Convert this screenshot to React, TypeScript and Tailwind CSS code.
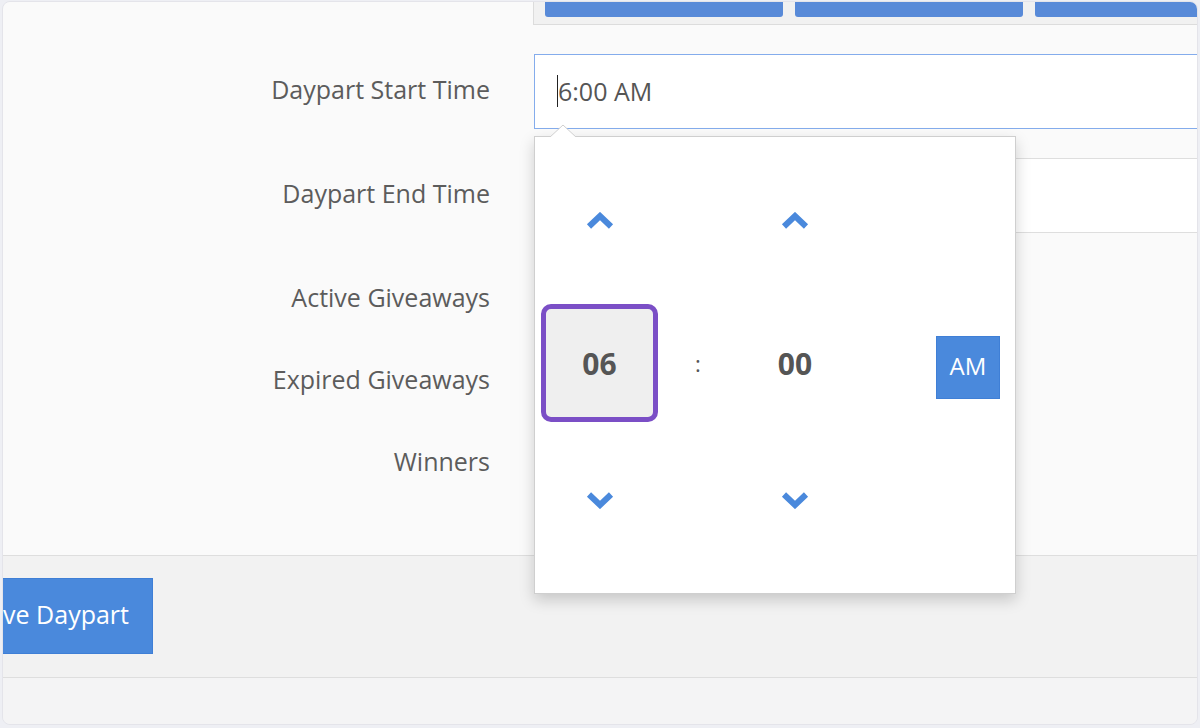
import React from "react";

const labelCls = "w-[530px] shrink-0 text-right pr-[43px] text-[25px] text-[#5c5c5c]";

function Chevron({ down }: { down?: boolean }) {
  return (
    <svg width="30" height="18" viewBox="0 0 30 18" className={down ? "rotate-180" : ""}>
      <polyline
        points="4,14.5 15,4 26,14.5"
        fill="none"
        stroke="#4a89dc"
        strokeWidth="6"
        strokeLinejoin="miter"
      />
    </svg>
  );
}

function TimePicker() {
  return (
    <div className="absolute left-[534px] top-[136px] w-[482px] h-[458px] bg-white border border-[#cfcfcf] shadow-[0_6px_14px_rgba(0,0,0,0.18)]">
      {/* arrow */}
      <svg className="absolute left-[13px] top-[-13px]" width="30" height="14" viewBox="0 0 30 14">
        <polygon points="1,14 15,1 29,14" fill="white" stroke="#cfcfcf" strokeWidth="1" />
        <rect x="0" y="13" width="30" height="2" fill="white" />
      </svg>
      <div className="flex pl-[6px] pt-[49px]">
        {/* hours */}
        <div className="w-[117px] flex flex-col items-center">
          <div className="h-[70px] flex items-center justify-center">
            <Chevron />
          </div>
          <div className="mt-[48px] w-[117px] h-[118px] border-[5px] border-[#7b4fc6] rounded-[10px] bg-[#efefef] flex items-center justify-center text-[30px] font-bold text-[#555]">
            06
          </div>
          <div className="mt-[43px] h-[70px] flex items-center justify-center">
            <Chevron down />
          </div>
        </div>
        {/* separator */}
        <div className="w-[80px] flex flex-col items-center">
          <div className="mt-[118px] h-[118px] flex items-center justify-center text-[22px] text-[#555]">
            :
          </div>
        </div>
        {/* minutes */}
        <div className="w-[114px] flex flex-col items-center">
          <div className="h-[70px] flex items-center justify-center">
            <Chevron />
          </div>
          <div className="mt-[48px] h-[118px] flex items-center justify-center text-[30px] font-bold text-[#555]">
            00
          </div>
          <div className="mt-[43px] h-[70px] flex items-center justify-center">
            <Chevron down />
          </div>
        </div>
        <div className="w-[84px]" />
        {/* period */}
        <div className="w-[64px] flex flex-col">
          <button className="mt-[150px] w-[64px] h-[63px] bg-[#4a89dc] border border-[#3f7fd6] text-white text-[24px] flex items-center justify-center pb-[3px]">
            AM
          </button>
        </div>
      </div>
    </div>
  );
}

export default function App() {
  return (
    <div className="relative w-[1200px] h-[728px] overflow-hidden bg-[#eeeff4] font-['Open_Sans',sans-serif]">
      <div className="mt-[1px] mx-[2px] h-[724px] rounded-lg border border-[#e4e4ea] overflow-hidden flex flex-col">
        {/* form */}
        <div className="h-[554px] shrink-0 bg-[#fafafa] border-b border-[#dedede]">
          <div className="flex">
            <div className="w-[530px] shrink-0" />
            <div className="w-[700px] shrink-0 h-[23px] bg-[#f1f1f1] border-l border-b border-[#dcdcdc] flex gap-[12px] pl-[11px]">
              <div className="w-[240px] h-[15px] bg-[#588ad8] rounded-b-[3px]" />
              <div className="w-[230px] h-[15px] bg-[#588ad8] rounded-b-[3px]" />
              <div className="w-[200px] h-[15px] bg-[#588ad8] rounded-b-[3px]" />
            </div>
          </div>

          <div className="flex items-center mt-[29px]">
            <div className={`${labelCls} mb-[4px]`}>Daypart Start Time</div>
            <div className="ml-[1px] w-[700px] shrink-0 h-[75px] bg-white border border-[#84acec] flex items-center pl-[22px] text-[25px] text-[#555] pb-[2px]">
              <span className="border-l border-[#222] leading-[32px]">6:00 AM</span>
            </div>
          </div>

          <div className="flex items-center mt-[29px]">
            <div className={`${labelCls} mb-[4px]`}>Daypart End Time</div>
            <div className="ml-[1px] w-[700px] shrink-0 h-[75px] bg-white border border-[#dedede]" />
          </div>

          <div className="mt-[24px]">
            {["Active Giveaways", "Expired Giveaways", "Winners"].map((label) => (
              <div key={label} className="h-[82px] flex items-center">
                <div className={labelCls}>{label}</div>
              </div>
            ))}
          </div>
        </div>

        {/* actions */}
        <div className="h-[122px] shrink-0 bg-[#f2f2f2] border-b border-[#dedede] pt-[22px]">
          <button className="ml-[-52px] h-[76px] w-[202px] bg-[#4a89dc] border border-[#3f7fd6] text-white text-[25px] flex items-center justify-end pr-[23px] pb-[2px] whitespace-nowrap">
            Save Daypart
          </button>
        </div>

        <div className="flex-1 bg-[#f4f4f5]" />
      </div>

      <TimePicker />
    </div>
  );
}
